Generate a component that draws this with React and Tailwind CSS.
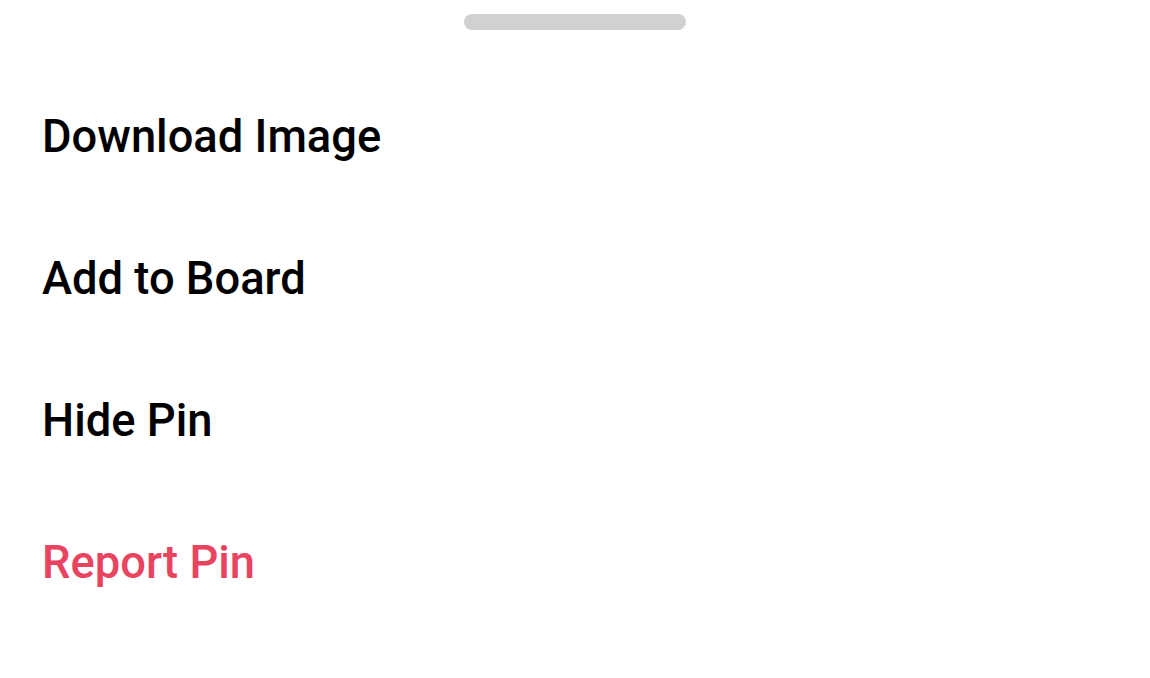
import React from 'react';

const items = [
  { label: 'Download Image' },
  { label: 'Add to Board' },
  { label: 'Hide Pin' },
  { label: 'Report Pin', danger: true },
];

const App = () => {
  return (
    <div className="w-full min-h-screen bg-white font-['Roboto',sans-serif]">
      {/* Handle */}
      <div className="pt-[14px] flex justify-center">
        <div className="w-[222px] h-[16px] rounded-full bg-[#d1d1d1]"></div>
      </div>

      {/* Options */}
      <div className="mt-[36px]">
        {items.map((item) => (
          <div
            key={item.label}
            className={`h-[142px] flex items-center px-[42px] text-[45.3px] font-medium ${
              item.danger ? 'text-[#e9445f]' : 'text-black'
            }`}
          >
            {item.label}
          </div>
        ))}
      </div>
    </div>
  );
};

export default App;
